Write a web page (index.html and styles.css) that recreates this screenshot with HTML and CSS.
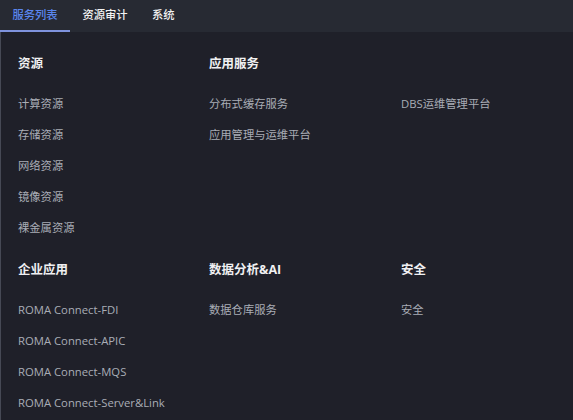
FILE: index.html
```html
<!DOCTYPE html>
<html lang="zh-CN">
<head>
<meta charset="utf-8">
<title>服务列表</title>
<link rel="stylesheet" href="styles.css">
</head>
<body>
<div class="tabs">
  <div class="tab active">服务列表</div>
  <div class="tab">资源审计</div>
  <div class="tab">系统</div>
</div>
<div class="panel">
  <div class="section">
    <div class="heading">资源</div>
    <ul class="items">
      <li>计算资源</li>
      <li>存储资源</li>
      <li>网络资源</li>
      <li>镜像资源</li>
      <li>裸金属资源</li>
    </ul>
  </div>
  <div class="section span2">
    <div class="heading">应用服务</div>
    <ul class="items two">
      <li>分布式缓存服务</li>
      <li>DBS运维管理平台</li>
      <li>应用管理与运维平台</li>
    </ul>
  </div>
  <div class="section">
    <div class="heading">企业应用</div>
    <ul class="items">
      <li>ROMA Connect-FDI</li>
      <li>ROMA Connect-APIC</li>
      <li>ROMA Connect-MQS</li>
      <li>ROMA Connect-Server&amp;Link</li>
    </ul>
  </div>
  <div class="section">
    <div class="heading">数据分析&amp;AI</div>
    <ul class="items">
      <li>数据仓库服务</li>
    </ul>
  </div>
  <div class="section">
    <div class="heading">安全</div>
    <ul class="items">
      <li>安全</li>
    </ul>
  </div>
</div>
</body>
</html>
```
FILE: styles.css
```css
html, body {
  margin: 0;
  padding: 0;
  background: #1f2029;
  font-family: "Open Sans", "Noto Sans CJK SC", sans-serif;
  width: 573px;
  height: 420px;
  overflow: hidden;
}
.tabs {
  display: flex;
  height: 32px;
  background: #272a33;
}
.tab {
  width: 70px;
  box-sizing: border-box;
  text-align: center;
  line-height: 30px;
  height: 32px;
  font-size: 11.3px;
  color: #f2f2f2;
  font-weight: 500;
  border-bottom: 2px solid transparent;
}
.tab:last-child {
  width: auto;
  padding: 0 12px;
}
.tab.active {
  color: #5a86ee;
  border-bottom-color: #7f93dd;
}
.panel {
  border-left: 1px solid #464955;
  height: 388px;
  display: grid;
  grid-template-columns: 191px 192px 1fr;
  row-gap: 17px;
  padding-top: 22px;
  box-sizing: border-box;
  align-content: start;
}
.section {
  padding-left: 17px;
}
.section.span2 {
  grid-column: span 2;
}
.heading {
  font-size: 12.5px;
  line-height: 20px;
  font-weight: 700;
  color: #f0f0f2;
  margin-bottom: 14px;
}
.items {
  list-style: none;
  margin: 0;
  padding: 0;
}
.items.two {
  display: grid;
  grid-template-columns: 192px 1fr;
}
.items li {
  font-size: 11.3px;
  line-height: 31px;
  color: #a9adb6;
  white-space: nowrap;
}
```
